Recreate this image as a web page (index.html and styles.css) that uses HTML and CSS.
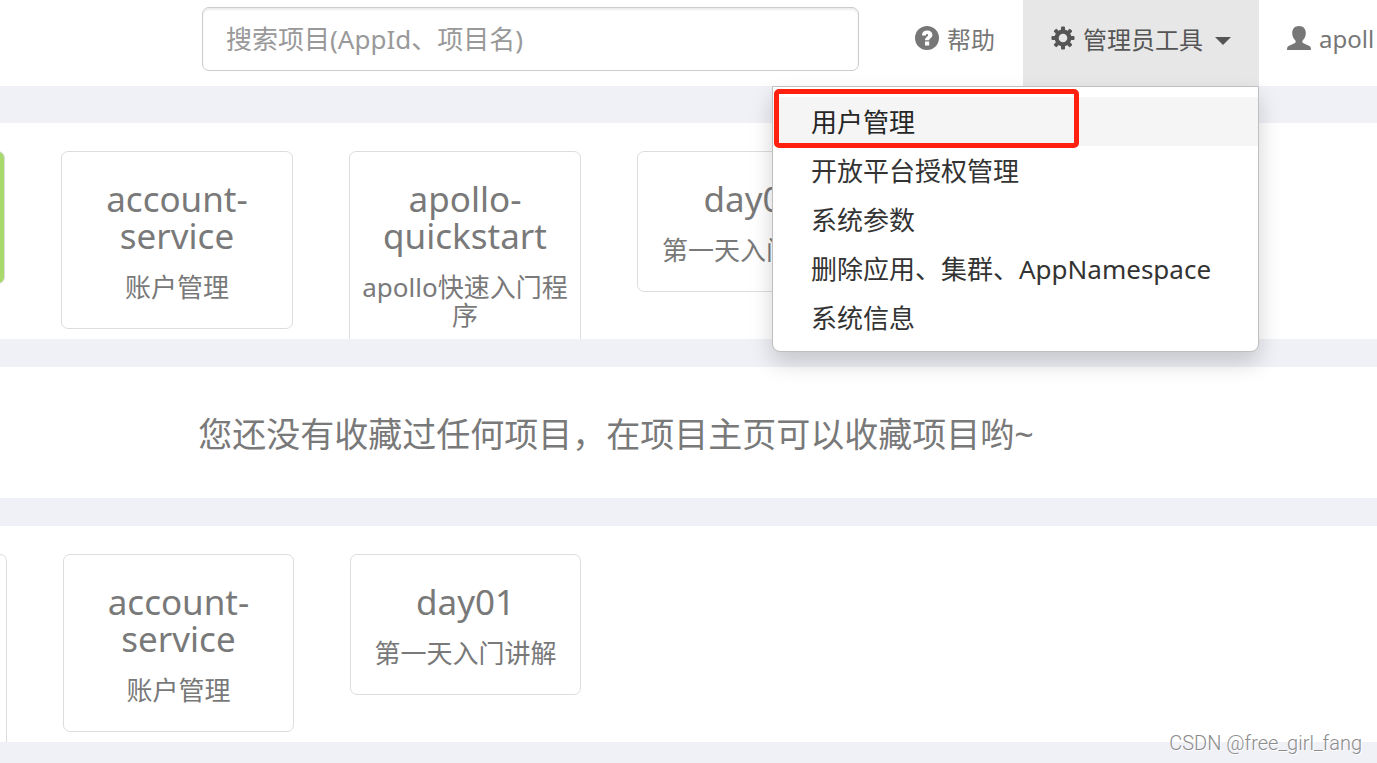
FILE: index.html
```html
<!DOCTYPE html>
<html lang="zh-CN">

<head>
    <meta charset="UTF-8">
    <meta name="viewport" content="width=device-width, initial-scale=1.0">
    <title>Apollo</title>
    <link rel="stylesheet" href="styles.css">
</head>

<body>
    <header class="navbar">
        <form class="search">
            <input type="text" class="search-input" aria-label="搜索项目" placeholder="搜索项目(AppId、项目名)">
        </form>
        <nav class="nav">
            <a class="nav-item" href="#">
                <svg class="icon" viewBox="0 0 24 24">
                    <circle cx="12" cy="12" r="12" fill="currentColor"/>
                    <path d="M7 9.6C7 6.2 8.9 4.6 12.2 4.6C15.4 4.6 17.4 6.2 17.4 9C17.4 12 14.2 12.2 14.2 14.2H10C10 11.2 13 10.8 13 9.2C13 8.3 12.7 7.9 12.1 7.9C11.3 7.9 10.9 8.5 10.9 9.6ZM10 15.6H14.2V19.6H10Z" fill="#fff"/>
                </svg>
                <span>帮助</span>
            </a>
            <div class="dropdown">
                <button type="button" class="nav-item active">
                    <svg class="icon" viewBox="0 0 24 24">
                        <g fill="currentColor">
                            <rect x="10" y="0.5" width="4" height="23" rx="1"/>
                            <rect x="10" y="0.5" width="4" height="23" rx="1" transform="rotate(45 12 12)"/>
                            <rect x="10" y="0.5" width="4" height="23" rx="1" transform="rotate(90 12 12)"/>
                            <rect x="10" y="0.5" width="4" height="23" rx="1" transform="rotate(135 12 12)"/>
                            <circle cx="12" cy="12" r="8.4"/>
                        </g>
                        <circle cx="12" cy="12" r="4.3" fill="#e7e7e7"/>
                    </svg>
                    <span>管理员工具</span>
                    <span class="caret"></span>
                </button>
                <ul class="dropdown-menu">
                    <li><a class="hover" href="#">用户管理</a></li>
                    <li><a href="#">开放平台授权管理</a></li>
                    <li><a href="#">系统参数</a></li>
                    <li><a href="#">删除应用、集群、AppNamespace</a></li>
                    <li><a href="#">系统信息</a></li>
                </ul>
                <div class="marker"></div>
            </div>
            <a class="nav-item user" href="#">
                <svg class="icon" viewBox="0 0 24 24">
                    <path d="M12 0C16.4 0 18.8 2.8 18.8 7C18.8 9.8 17.8 12.4 15.8 14.2C15 15 15.2 16.4 16 16.9L22.4 20C23.6 20.6 24 21.8 24 24H0C0 21.8 0.4 20.6 1.6 20L8 16.9C8.8 16.4 9 15 8.2 14.2C6.2 12.4 5.2 9.8 5.2 7C5.2 2.8 7.6 0 12 0Z" fill="currentColor"/>
                </svg>
                <span>apoll</span>
            </a>
        </nav>
    </header>

    <main>
        <section class="panel apps">
            <button type="button" class="card create" aria-label="+"></button>
            <a class="card" href="#">
                <h4>account-service</h4>
                <p>账户管理</p>
            </a>
            <a class="card" href="#">
                <h4>apollo-quickstart</h4>
                <p>apollo快速入门程序</p>
            </a>
            <a class="card" href="#">
                <h4>day01</h4>
                <p>第一天入门讲解</p>
            </a>
        </section>

        <section class="panel empty">
            <h4>您还没有收藏过任何项目，在项目主页可以收藏项目哟~</h4>
        </section>

        <section class="panel apps recent">
            <div class="card tall"></div>
            <a class="card" href="#">
                <h4>account-service</h4>
                <p>账户管理</p>
            </a>
            <a class="card" href="#">
                <h4>day01</h4>
                <p>第一天入门讲解</p>
            </a>
        </section>
    </main>

    <div class="watermark">CSDN @free_girl_fang</div>
</body>

</html>
```

FILE: styles.css
```css
* {
    box-sizing: border-box;
}

body {
    margin: 0;
    min-height: 100vh;
    background: #f0f1f7;
    color: #797979;
    font-family: "Noto Sans", "Noto Sans CJK SC", sans-serif;
    font-size: 26px;
    overflow: hidden;
    position: relative;
}

a {
    color: inherit;
    text-decoration: none;
}

h4, p, ul {
    margin: 0;
    padding: 0;
    font-weight: 400;
}

/* top bar */
.navbar {
    display: flex;
    height: 86px;
    padding-left: 202px;
    background: #fff;
}

.search {
    flex: 1;
    padding-top: 7px;
}

.search-input {
    width: 100%;
    height: 64px;
    padding: 0 23px;
    border: 1px solid #ccc;
    border-radius: 7px;
    box-shadow: inset 0 2px 2px rgba(0, 0, 0, 0.075);
    font: inherit;
}

.search-input::placeholder {
    color: #999;
    opacity: 1;
}

.nav {
    display: flex;
    margin-left: 28px;
}

.nav-item {
    display: flex;
    align-items: center;
    gap: 8px;
    height: 86px;
    padding: 0 28px 10px;
    border: 0;
    background: none;
    color: #777;
    font-family: inherit;
    font-size: 24px;
    white-space: nowrap;
}

.nav-item.active {
    background: #e7e7e7;
    color: #555;
}

.user {
    width: 118px;
    overflow: hidden;
}

.icon {
    flex: none;
    width: 24px;
    height: 24px;
}

.caret {
    margin: 6px 0 0 4px;
    border-top: 8px solid;
    border-left: 8px solid transparent;
    border-right: 8px solid transparent;
}

.dropdown {
    position: relative;
}

.dropdown-menu {
    position: absolute;
    top: 86px;
    right: 0;
    z-index: 10;
    width: 487px;
    padding: 10px 0 9px;
    list-style: none;
    background: #fff;
    border: 1px solid #bfbfbf;
    border-radius: 0 0 8px 8px;
    box-shadow: 0 11px 22px rgba(0, 0, 0, 0.175);
}

.dropdown-menu a {
    display: block;
    padding: 2px 38px 0;
    color: #333;
    line-height: 47px;
    white-space: nowrap;
}

.dropdown-menu .hover {
    background: #f5f5f5;
    color: #262626;
}

.marker {
    position: absolute;
    top: 89px;
    right: 180px;
    z-index: 11;
    width: 305px;
    height: 59px;
    border: 5px solid #ff2010;
    border-radius: 5px;
}

/* panels */
main {
    display: flex;
    flex-direction: column;
    gap: 28px;
    padding-top: 37px;
}

.panel {
    background: #fff;
}

.apps {
    display: flex;
    align-items: flex-start;
    gap: 56px;
    height: 216px;
    padding-top: 28px;
    overflow: hidden;
}

/* first card is scrolled off to the left */
.apps .card:first-child {
    margin-left: -227px;
}

.recent .card:first-child {
    margin-left: -224px;
}

.card {
    flex: none;
    width: 232px;
    padding: 28px 8px 27px;
    border: 1px solid #ddd;
    border-radius: 7px;
    text-align: center;
}

.recent .card {
    width: 231px;
}

.card h4 {
    margin-bottom: 19px;
    font-size: 35px;
    line-height: 37px;
}

.card p {
    line-height: 28px;
}

.create {
    height: 133px;
    background: #a9d96c;
}

.tall {
    height: 206px;
}

.empty {
    padding: 49px 145px 45px 0;
}

.empty h4 {
    font-size: 34px;
    line-height: 37px;
    text-align: center;
}

.watermark {
    position: absolute;
    right: 15px;
    bottom: 8px;
    color: #8c8c8c;
    font-family: Roboto, sans-serif;
    font-size: 20px;
    font-weight: 300;
    line-height: 24px;
    text-shadow: 1px 1px 0 #fff;
}
```
